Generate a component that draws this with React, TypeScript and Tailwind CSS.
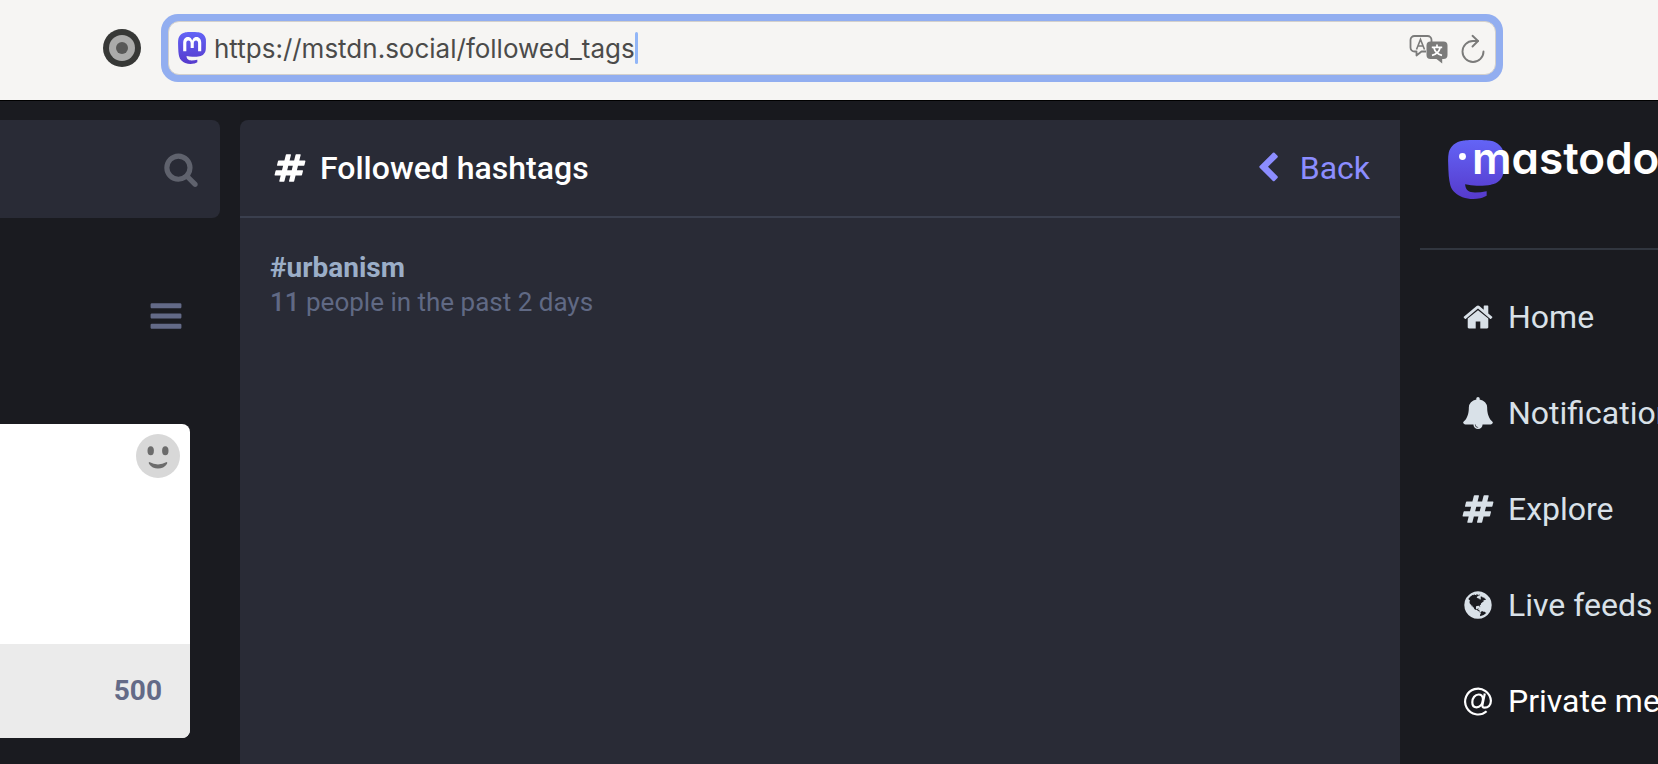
import React from "react";

const LOGO_BODY =
  "M23.268 5.313c-.35-2.578-2.617-4.61-5.304-5.004C17.51.242 15.792 0 11.813 0h-.03c-3.98 0-4.835.242-5.288.309C3.882.692 1.496 2.518.917 5.127.64 6.412.61 7.837.661 9.143c.074 1.874.088 3.745.26 5.611.118 1.24.325 2.47.62 3.68.55 2.237 2.777 4.098 4.96 4.857 2.336.792 4.849.923 7.256.38.265-.061.527-.132.786-.213.585-.184 1.27-.39 1.774-.753a.057.057 0 0 0 .023-.043v-1.809a.052.052 0 0 0-.02-.041.053.053 0 0 0-.046-.01 20.282 20.282 0 0 1-4.709.545c-2.73 0-3.463-1.284-3.674-1.818a5.593 5.593 0 0 1-.319-1.433.053.053 0 0 1 .066-.054c1.517.363 3.072.546 4.632.546.376 0 .75 0 1.125-.01 1.57-.044 3.224-.124 4.768-.422.038-.008.077-.015.11-.024 2.435-.464 4.753-1.92 4.989-5.604.008-.145.03-1.52.03-1.67.002-.512.167-3.63-.024-5.545z";
const LOGO_MARK =
  "M19.52 14.508h-2.561V8.29c0-1.309-.55-1.976-1.67-1.976-1.23 0-1.846.79-1.846 2.35v3.403h-2.546V8.663c0-1.56-.617-2.35-1.848-2.35-1.112 0-1.668.668-1.67 1.977v6.218H4.822V8.102c0-1.31.337-2.35 1.011-3.12.696-.77 1.608-1.164 2.74-1.164 1.311 0 2.302.5 2.962 1.498l.638 1.06.638-1.06c.66-.999 1.65-1.498 2.96-1.498 1.13 0 2.043.395 2.74 1.164.675.77 1.012 1.81 1.012 3.12z";

const ICONS = {
  hashtag:
    "M991 1024l64-256h-254l-64 256h254zm768-504l-56 224q-7 24-31 24h-327l-64 256h311q15 0 25 12 10 14 6 28l-56 224q-5 24-31 24h-327l-81 328q-7 24-31 24h-224q-16 0-26-12-9-12-6-28l78-312h-254l-81 328q-7 24-31 24h-225q-15 0-25-12-9-12-6-28l78-312h-311q-15 0-25-12-9-12-6-28l56-224q7-24 31-24h327l64-256h-311q-15 0-25-12-10-14-6-28l56-224q5-24 31-24h327l81-328q7-24 32-24h224q15 0 25 12 9 12 6 28l-78 312h254l81-328q7-24 32-24h224q15 0 25 12 9 12 6 28l-78 312h311q15 0 25 12 9 12 6 28z",
  home:
    "M1472 992v480q0 26-19 45t-45 19h-384v-384h-256v384h-384q-26 0-45-19t-19-45v-480q0-1 .5-3t.5-3l575-474 575 474q1 2 1 6zm223-69l-62 74q-8 9-21 11h-3q-13 0-21-7l-692-577-692 577q-12 8-24 7-13-2-21-11l-62-74q-8-10-7-23.5t11-21.5l719-599q32-26 76-26t76 26l244 204v-195q0-14 9-23t23-9h192q14 0 23 9t9 23v408l219 182q10 8 11 21.5t-7 23.5z",
  bell:
    "M912 1696q0-16-16-16-59 0-101.5-42.5t-42.5-101.5q0-16-16-16t-16 16q0 73 51.5 124.5t124.5 51.5q16 0 16-16zm816-288q0 52-38 90t-90 38h-448q0 106-75 181t-181 75-181-75-75-181h-448q-52 0-90-38t-38-90q50-42 91-88t85-119.5 74.5-158.5 50-206 19.5-260q0-152 117-282.5t307-158.5q-8-19-8-39 0-40 28-68t68-28 68 28 28 68q0 20-8 39 190 28 307 158.5t117 282.5q0 139 19.5 260t50 206 74.5 158.5 85 119.5 91 88z",
  search:
    "M1216 832q0-185-131.5-316.5t-316.5-131.5-316.5 131.5-131.5 316.5 131.5 316.5 316.5 131.5 316.5-131.5 131.5-316.5zm512 832q0 52-38 90t-90 38q-54 0-90-38l-343-342q-179 124-399 124-143 0-273.5-55.5t-225-150-150-225-55.5-273.5 55.5-273.5 150-225 225-150 273.5-55.5 273.5 55.5 225 150 150 225 55.5 273.5q0 220-124 399l343 343q37 37 37 90z",
  bars:
    "M1664 1344v128q0 26-19 45t-45 19h-1408q-26 0-45-19t-19-45v-128q0-26 19-45t45-19h1408q26 0 45 19t19 45zm0-512v128q0 26-19 45t-45 19h-1408q-26 0-45-19t-19-45v-128q0-26 19-45t45-19h1408q26 0 45 19t19 45zm0-512v128q0 26-19 45t-45 19h-1408q-26 0-45-19t-19-45v-128q0-26 19-45t45-19h1408q26 0 45 19t19 45z",
  chevronLeft:
    "M1427 301l-531 531 531 531q19 19 19 45t-19 45l-166 166q-19 19-45 19t-45-19l-742-742q-19-19-19-45t19-45l742-742q19-19 45-19t45 19l166 166q19 19 19 45t-19 45z",
  globe:
    "M896 128q209 0 385.5 103t279.5 279.5 103 385.5-103 385.5-279.5 279.5-385.5 103-385.5-103-279.5-279.5-103-385.5 103-385.5 279.5-279.5 385.5-103zm274 521q-2 1-9.5 9.5t-13.5 9.5q2 0 4.500-5t5-11 3.500-7q6-7 22-15 14-6 52-12 34-8 51 11-2-2 9.500-13t14.500-12q3-2 15-4.500t15-7.500l2-22q-12 1-17.500-7t-6.500-21q0 2-6 8 0-7-4.500-8t-11.500 1-9 1q-10-3-15-7.500t-8-16.500-4-15q-2-5-9.500-11t-9.500-10q-1-2-2.500-5.500t-3-6.500-4-5.500-5.500-2.500-7 5-7.500 10-4.500 5q-3-2-6-1.500t-4.500 1-4.500 3-5 3.500q-3 2-8.500 3t-8.500 2q15-5-1-11-10-4-16-3 9-4 7.500-12t-8.500-14h5q-1-4-8.500-8.500t-17.500-8.500-13-6q-8-5-34-9.500t-33-.5q-5 6-4.500 10.500t4 14 3.500 12.500q1 6-5.500 13t-6.500 12q0 7 14 15.500t10 21.500q-3 8-16 16t-16 12q-5 8-1.500 18.500t10.500 16.500q2 2 1.500 4t-3.500 4.500-5.500 4-6.500 3.500l-3 2q-11 5-20.500-6t-13.500-26q-7-25-16-30-23-8-29 1-5-13-41-26-25-9-58-4 6-1 0-15-7-15-19-12 3-6 4-17.500t1-13.500q3-13 12-23 1-1 7-8.500t9.500-13.500.5-6q35 4 50-11 5-5 11.500-17t10.500-17q9-6 14-5.500t14.500 5.500 14.500 5q14 1 15.500-11t-7.500-20q12 1 3-17-4-7-8-9-12-4-27 5-8 4 2 8-1-1-9.500 10.500t-16.500 17.500-16-5q-1-1-5.500-13.500t-9.500-13.500q-8 0-16 15 3-8-11-15t-24-8q19-12-8-27-7-4-20.500-5t-19.500 4q-5 7-5.500 11.500t5 8 10.500 5.500 11.500 4 8.500 3q14 10 8 14-2 1-8.500 3.500t-11.500 4.500-6 4q-3 4 0 14t-2 14q-5-5-9-17.500t-7-16.500q7 9-25 6l-10-1q-4 0-16 2t-20.500 1-13.500-8q-4-8 0-20 1-4 4-2-4-3-11-9.500t-10-8.500q-46 15-94 41 6 1 12-1 5-2 13-6.500t10-5.500q34-14 42-7l5-5q14 16 20 25-7-4-30-1-20 6-22 12 7 12 5 18-4-3-11.500-10t-14.500-11-15-5q-16 0-22 1-146 80-235 222 7 7 12 8 4 1 5 9t2.500 11 11.500-3q9 8 3 19 1-1 44 27 19 17 21 21 3 11-10 18-1-2-9-9t-9-4q-3 5 .5 18.500t10.500 12.500q-7 0-9.500 16t-2.500 35.500-1 23.500l2 1q-3 12 5.500 34.500t21.500 19.500q-13 3 20 43 6 8 8 9 3 2 12 7.500t15 10 10 10.500q4 5 10 22.500t14 23.500q-2 6 9.500 20t10.500 23q-1 0-2.500 1t-2.500 1q3 7 15.500 14t15.500 13q1 3 2 10t3 11 8 2q2-20-24-62-15-25-17-29-3-5-5.500-15.500t-4.500-14.500q2 0 6 1.500t8.500 3.500 7.500 4 2 3q-3 7 2 17.500t12 18.500 17 19 12 13q6 6 14 19.500t0 13.500q9 0 20 10.500t17 19.500q5 8 8 26t5 24q2 7 8.500 13.500t12.500 9.500l16 8 13 7q5 2 18.500 10.500t21.500 11.500q10 4 16 4t14.500-2.500 13.500-3.500q15-2 29 15t21 21q36 19 55 11-2 1 .5 7.500t8 15.500 9 14.500 5.500 8.500q5 6 18 15t18 15q6-4 7-9-3 8 7 20t18 10q14-3 14-32-31 15-49-18 0-1-2.500-5.500t-4-8.500-2.500-8.500 0-7.500 5-3q9 0 10-3.500t-2-12.500-4-13q-1-8-11-20t-12-15q-5 9-16 8t-16-9q0 1-1.500 5.500t-1.500 6.500q-13 0-15-1 1-3 2.500-17.500t3.500-22.500q1-4 5.500-12t7.500-14.500 4-12.500-4.500-9.500-17.500-2.500q-19 1-26 20-1 3-3 10.500t-5 11.500-9 7q-7 3-24 2t-24-5q-13-8-22.500-29t-9.500-37q0-10 2.500-26.500t3-25-5.500-24.500q3-2 9-9.500t10-10.500q2-1 4.500-1.500t4.500 0 4-1.500 3-6q-1-1-4-3-3-3-4-3 7 3 28.500-1.500t27.500 1.500q15 11 22-2 0-1-2.500-9.500t-.5-13.500q5 27 29 9 3 3 15.500 5t17.500 5q3 2 7 5.500t5.500 4.500 5-.5 8.500-6.500q10 14 12 24 11 40 19 44 7 3 11 2t4.500-9.500 0-14-1.500-12.500l-1-8v-18l-1-8q-15-3-18.500-12t1.500-18.500 15-18.500q1-1 8-3.500t15.500-6.500 12.500-8q21-19 15-35 7 0 11-9-1 0-5-3t-7.500-5-4.500-2q9-5 2-16 5-3 7.500-11t7.500-10q9 12 21 2 8-8 1-16 5-7 20.500-10.500t18.500-9.500q7 2 8-2t1-12 3-12q4-5 15-9t13-5l17-11q3-4 0-4 18 2 31-11 10-11-6-20 3-6-3-9.500t-15-5.500q3-1 11.500-.5t10.500-1.500q15-10-7-16-17-5-43 12zm-163 877q206-36 351-189-3-3-12.500-4.500t-12.500-3.500q-18-7-24-8 1-7-2.500-13t-8-9-12.500-8-11-7q-2-2-7-6t-7-5.500-7.500-4.500-8.500-2-10 1l-3 1q-3 1-5.500 2.500t-5.500 3-4 3 0 2.500q-21-17-36-22-5-1-11-5.500t-10.500-7-10-1.500-11.500 7q-5 5-6 15t-2 13q-7-5 0-17.500t2-18.500q-3-6-10.500-4.500t-12 4.500-11.500 8.500-9 6.500-8.500 5.500-8.500 7.500q-3 4-6 12t-5 11q-2-4-11.500-6.500t-9.500-5.500q2 10 4 35t5 38q7 31-12 48-27 25-29 40-4 22 12 26 0 7-8 20.500t-7 21.500q0 6 2 16z",
};

type IconName = keyof typeof ICONS;

function Icon({ name, className }: { name: IconName; className: string }) {
  return (
    <svg viewBox="0 0 1792 1792" fill="currentColor" aria-hidden="true" className={className}>
      <path d={ICONS[name]} />
    </svg>
  );
}

function AtIcon({ className }: { className: string }) {
  return (
    <svg viewBox="0 0 32 32" fill="none" stroke="currentColor" strokeWidth="2.2" aria-hidden="true" className={className}>
      <path d="M24.600 26.200A12.900 12.900 0 1 1 28.900 15.800c0 4.600-2.900 6.900-6.200 6.900-2.100 0-2.600-1.100-2.200-3.100l2.300-11" />
      <path d="M20.900 13.700c-.3-2.700-1.800-4.200-4.300-4.200-3.500 0-6.300 3.600-6.300 7.700 0 3.200 1.600 5.100 4.300 5.100 3.300 0 5.800-3.100 6.300-7.300z" />
    </svg>
  );
}

function Favicon() {
  return (
    <svg viewBox="0.6 0 22.8 24" preserveAspectRatio="none" aria-hidden="true" className="h-8 w-7 shrink-0">
      <defs>
        <linearGradient id="favicon-fill" x1="0" y1="0" x2="0" y2="1">
          <stop offset="0" stopColor="#6364f6" />
          <stop offset="1" stopColor="#563acc" />
        </linearGradient>
      </defs>
      <path d={LOGO_BODY} fill="url(#favicon-fill)" />
      <path d={LOGO_MARK} fill="#fff" />
    </svg>
  );
}

function TranslateIcon() {
  return (
    <svg viewBox="0 0 40 30" aria-hidden="true" className="h-[30px] w-10">
      <path
        d="M17 17.500h-4.500l-5 4v-4H5.500a4 4 0 0 1-4-4V6a4 4 0 0 1 4-4h13a4 4 0 0 1 4 4v2"
        fill="none"
        stroke="#7b7b7a"
        strokeWidth="1.800"
        strokeLinejoin="round"
      />
      <path d="M7.500 15.500L11.500 5.500l4 10M9 12h5" fill="none" stroke="#7b7b7a" strokeWidth="1.600" />
      <path d="M21.500 7.500h13a4 4 0 0 1 4 4V21a4 4 0 0 1-4 4h-1.300v4.600L27.500 25h-6a4 4 0 0 1-4-4v-9.500a4 4 0 0 1 4-4z" fill="#7b7b7a" />
      <path d="M28 10.500v2.500M22.800 13.300h10.400M25 14c.7 3.200 3.600 6.300 8 7.300M31 14c-.7 3.200-3.600 6.300-8 7.300" fill="none" stroke="#fff" strokeWidth="1.700" />
    </svg>
  );
}

function ReloadIcon() {
  return (
    <svg viewBox="0 0 24 30" fill="none" stroke="#7b7b7a" strokeWidth="1.900" strokeLinecap="round" strokeLinejoin="round" aria-hidden="true" className="h-[30px] w-6">
      <path d="M22.500 17.500A10.500 10.500 0 1 1 12 7h5" />
      <path d="M11.500 1.800L17 7l-5.500 5.500" />
    </svg>
  );
}

function BrowserBar() {
  return (
    <header className="flex h-[101px] shrink-0 items-center border-b border-black bg-[#f6f5f3] pr-[155px] pb-1 pl-[103px]">
      <button type="button" aria-label="Extension" className="mr-5 shrink-0">
        <svg viewBox="0 0 38 38" aria-hidden="true" className="size-[38px]">
          <circle cx="19" cy="19" r="19" fill="#373836" />
          <circle cx="19" cy="19" r="13" fill="#ababaa" />
          <circle cx="19" cy="19" r="6" fill="#585857" />
        </svg>
      </button>
      <div className="min-w-0 flex-1 rounded-[17px] bg-[#92aef0] p-[7px]">
        <div className="flex h-[54px] items-center rounded-[11px] border border-[#d3d0cc] bg-[#f6f5f3] pr-2.5 pl-[9px]">
          <Favicon />
          <div className="ml-2 flex min-w-0 flex-1 items-center">
            <input
              type="text"
              aria-label="Address"
              defaultValue="https://mstdn.social/followed_tags"
              className="field-sizing-content bg-transparent pt-0.5 font-['Inter',sans-serif] text-[26px] leading-8 text-[#4b4b4a] outline-none"
            />
            <span className="h-8 w-[3px] rounded-sm bg-[#92b6f7]" />
          </div>
          <div className="flex items-center gap-3 pt-0.5">
            <button type="button" aria-label="Translate">
              <TranslateIcon />
            </button>
            <button type="button" aria-label="Reload">
              <ReloadIcon />
            </button>
          </div>
        </div>
      </div>
    </header>
  );
}

function ComposeColumn() {
  return (
    <aside className="w-[240px] shrink-0 pt-[19px] pr-5">
      <form className="flex h-[98px] items-center rounded-r-lg bg-[#292b36] pr-[21px]">
        <input type="search" aria-label="Search" className="h-full min-w-0 flex-1 bg-transparent text-[32px] text-white outline-none" />
        <button type="button" aria-label="Search" className="text-[#5f626d]">
          <Icon name="search" className="size-9" />
        </button>
      </form>
      <div className="flex h-[206px] items-start justify-end pt-20 pr-9">
        <button type="button" aria-label="Menu" className="text-[#636a87]">
          <Icon name="bars" className="size-9" />
        </button>
      </div>
      <div className="mr-[30px] overflow-hidden rounded-r-lg bg-white">
        <div className="flex h-[220px] items-start pt-2.5 pr-2.5">
          <textarea aria-label="Post text" className="h-full min-w-0 flex-1 resize-none text-[28px] text-black outline-none" />
          <button type="button" aria-label="Insert emoji" className="shrink-0">
            <svg viewBox="0 0 44 44" aria-hidden="true" className="size-11">
              <circle cx="22" cy="22" r="22" fill="#d8d8d8" />
              <ellipse cx="14.700" cy="16.700" rx="3.200" ry="4.500" fill="#6c6c6c" />
              <ellipse cx="29.300" cy="16.700" rx="3.200" ry="4.500" fill="#6c6c6c" />
              <path d="M13.300 28q8.700 4.800 17.400 0 1.200.5.200 2-3.200 4.500-8.900 4.500T13.100 30q-1-1.500.2-2z" fill="#6c6c6c" />
            </svg>
          </button>
        </div>
        <div className="flex h-[94px] items-center justify-end bg-[#ebebeb] pr-7 text-[28px] leading-8 font-bold text-[#636a87]">500</div>
      </div>
    </aside>
  );
}

function HashtagColumn() {
  return (
    <main className="flex min-w-0 flex-1 flex-col bg-[#18191e] pt-[19px]">
      <div className="flex h-[98px] items-center justify-between rounded-tl-lg border-b-2 border-[#3a3f4e] bg-[#292b36] pr-[30px] pl-8">
        <h1 className="flex items-center gap-3 text-[32px] leading-10 font-medium text-white">
          <span className="flex w-9 justify-center">
            <Icon name="hashtag" className="size-8" />
          </span>
          Followed hashtags
        </h1>
        <button type="button" className="flex items-center gap-4 text-[32px] leading-10 text-[#8c8dff]">
          <Icon name="chevronLeft" className="size-8" />
          Back
        </button>
      </div>
      <section className="flex-1 bg-[#292b36] px-[30px] pt-8">
        <a href="#urbanism" className="block">
          <strong className="block text-[28px] leading-9 font-bold text-[#9baec8]">#urbanism</strong>
          <span className="block text-[26px] leading-8 text-[#606984]">
            <b className="font-medium">11</b> people in the past 2 days
          </span>
        </a>
      </section>
    </main>
  );
}

const NAV: { label: string; icon: IconName | "at"; active?: boolean }[] = [
  { label: "Home", icon: "home" },
  { label: "Notifications", icon: "bell" },
  { label: "Explore", icon: "hashtag" },
  { label: "Live feeds", icon: "globe" },
  { label: "Private mentions", icon: "at", active: true },
];

function NavColumn() {
  return (
    <aside className="w-[258px] shrink-0 overflow-hidden pl-5">
      <div className="h-[149px] border-b-2 border-[#31363f] pt-[39px] pl-7">
        <a href="#home" aria-label="mastodon" className="flex items-start">
          <svg viewBox="0.6 0 22.8 24" preserveAspectRatio="none" aria-hidden="true" className="-mr-8 h-[59px] w-14 shrink-0">
            <defs>
              <linearGradient id="logo-fill" x1="0" y1="0" x2="0" y2="1">
                <stop offset="0" stopColor="#6364f6" />
                <stop offset="1" stopColor="#563acc" />
              </linearGradient>
            </defs>
            <path d={LOGO_BODY} fill="url(#logo-fill)" />
            <circle cx="6.500" cy="6.700" r="1.400" fill="#fff" />
          </svg>
          <span className="relative font-['Inter',sans-serif] text-[44px] leading-9 font-semibold text-white [font-feature-settings:'cv11']">mastodon</span>
        </a>
      </div>
      <nav className="pt-[19px]">
        {NAV.map(({ label, icon, active }) => (
          <a
            key={label}
            href={`#${label}`}
            className={`flex h-24 items-center gap-3 pl-10 text-[32px] leading-10 whitespace-nowrap ${active ? "text-white" : "text-[#d9e1e8]"}`}
          >
            <span className="flex w-9 shrink-0 justify-center">
              {icon === "at" ? <AtIcon className="size-8" /> : <Icon name={icon} className="size-8" />}
            </span>
            {label}
          </a>
        ))}
      </nav>
    </aside>
  );
}

export default function App() {
  return (
    <div className="flex min-h-screen flex-col overflow-hidden bg-[#1a1b20] font-['Roboto',sans-serif]">
      <BrowserBar />
      <div className="flex flex-1">
        <ComposeColumn />
        <HashtagColumn />
        <NavColumn />
      </div>
    </div>
  );
}
